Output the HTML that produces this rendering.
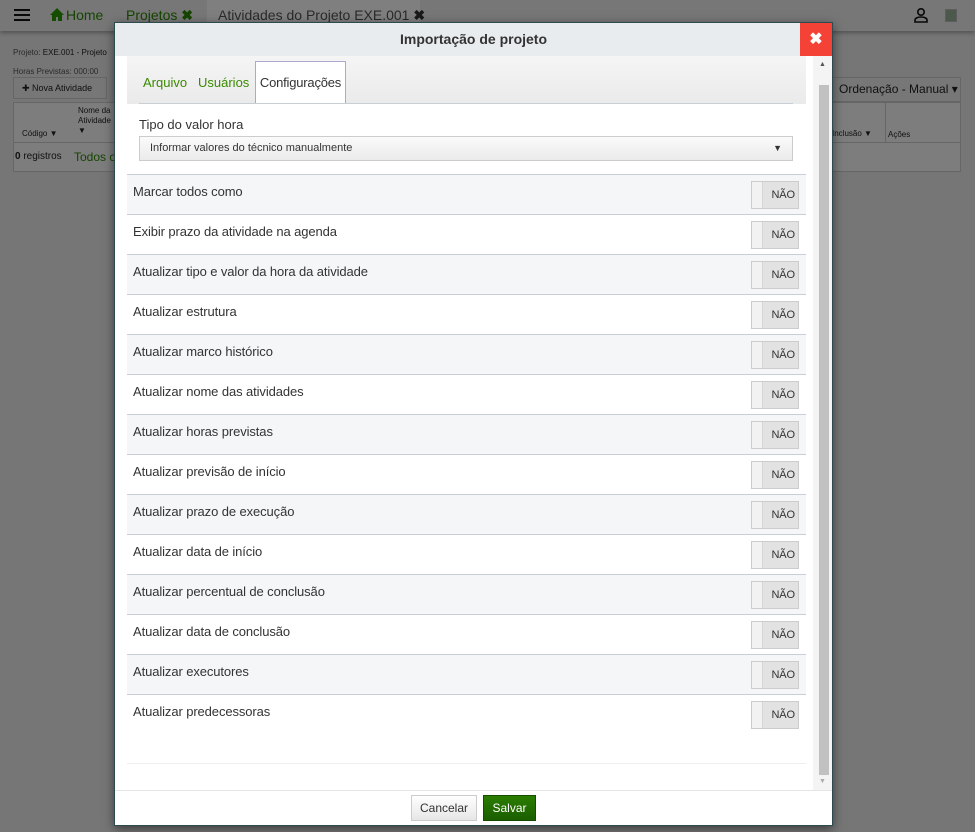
<!DOCTYPE html>
<html><head><meta charset="utf-8">
<style>
*{box-sizing:border-box;margin:0;padding:0}
body{width:975px;height:832px;overflow:hidden;font-family:"Liberation Sans",sans-serif;position:relative;color:#333;background:#ececec}
.top{position:absolute;left:0;top:0;width:975px;height:31px;background:#eeeeee;box-shadow:0 2px 4px rgba(0,0,0,.3)}
.top span{position:absolute;top:7px;font-size:14px}
.abs{position:absolute}
.ov{position:absolute;left:0;top:0;width:975px;height:832px;background:rgba(0,0,0,0.5)}
.modal{position:absolute;left:114px;top:22px;width:719px;height:804px;background:#fff;border:1px solid #2d4a4f;box-shadow:0 3px 10px rgba(0,0,0,.5)}
.mh{height:33px;background:#e9ecef;text-align:center;font-weight:bold;font-size:14px;line-height:33px;color:#333}
.close{position:absolute;right:0;top:0;width:32px;height:33px;background:#f44336;color:#fff;font-weight:bold;font-size:16px;text-align:center;line-height:33px}
.tabs{position:absolute;left:12px;top:33px;width:679px;height:48px;background:linear-gradient(#f5f5f5,#eaeaea)}
.tab{position:absolute;top:19px;font-size:13px;color:#3a8a00}
.ctab{position:absolute;left:128px;top:5px;width:91px;height:43px;background:#fff;border:1px solid #aac;border-bottom:none;font-size:13px;color:#333;text-align:center;line-height:42px;letter-spacing:-0.2px}
.row{position:absolute;left:12px;width:679px;height:40px;border-top:1px solid #c8ced6;font-size:13px;padding:9px 6px;letter-spacing:-0.1px}
.row.g{background:#f5f6f8}
.tg{position:absolute;right:7px;top:6px;width:48px;height:28px;border:1px solid #ccc;background:#e2e2e2;font-size:11px;text-align:right;padding-right:3px;line-height:26px;color:#333}
.tg:before{content:"";position:absolute;left:0;top:0;width:10px;height:26px;background:#f2f2f2;border-right:1px solid #d4d4d4}
</style></head><body>
<div class="top">
<div class="abs" style="left:14px;top:9px;width:16px;height:2px;background:#111;box-shadow:0 5px 0 #111,0 10px 0 #111"></div>
<svg class="abs" style="left:50px;top:8px" width="14" height="13" viewBox="0 0 14 13"><path d="M7 0L0 7h2v6h4V9h2v4h4V7h2z" fill="#2a9a00"/></svg>
<span style="left:66px;color:#2a8a00">Home</span>
<span style="left:126px;color:#2a8a00">Projetos <b style="color:#2a8a00">✖</b></span>
<div class="abs" style="left:207px;top:0;width:213px;height:31px;background:#ffffff"></div>
<span style="left:218px;color:#555">Atividades do Projeto EXE.001 <b style="color:#333">✖</b></span>
<svg class="abs" style="left:913px;top:7px" width="16" height="16" viewBox="0 0 16 16"><circle cx="8" cy="5" r="3.2" fill="none" stroke="#111" stroke-width="1.6"/><path d="M2 15v-2c0-2 3-3 6-3s6 1 6 3v2z" fill="none" stroke="#111" stroke-width="1.6"/></svg>
<div class="abs" style="left:945px;top:9px;width:12px;height:13px;background:#9ab09a;border:1px solid #bbb"></div>
</div>
<div class="abs" style="left:13px;top:48px;font-size:8px;color:#555">Projeto: <b style="font-weight:normal;color:#222">EXE.001 - Projeto</b></div>
<div class="abs" style="left:13px;top:67px;font-size:8px;color:#555">Horas Previstas: 000:00</div>
<div class="abs" style="left:13px;top:77px;width:94px;height:22px;background:#eee;border:1px solid #ccc;font-size:9px;line-height:20px;padding-left:8px;color:#222">✚ Nova Atividade</div>
<div class="abs" style="left:13px;top:102px;width:948px;height:70px;border:1px solid #ccc;background:#fafafa"></div>
<div class="abs" style="left:13px;top:142px;width:948px;height:1px;background:#ccc"></div>
<div class="abs" style="left:22px;top:129px;font-size:8px;color:#222">Código ▼</div>
<div class="abs" style="left:78px;top:106px;font-size:8px;color:#222;line-height:10px">Nome da<br>Atividade<br>▼</div>
<div class="abs" style="left:15px;top:151px;font-size:10px;color:#222"><b>0</b> registros</div>
<div class="abs" style="left:74px;top:150px;font-size:12px;color:#2a8a00">Todos o</div>
<div class="abs" style="left:832px;top:77px;width:129px;height:25px;background:#eee;border:1px solid #ccc;font-size:12px;line-height:23px;padding-left:6px;color:#222">Ordenação - Manual ▾</div>
<div class="abs" style="left:832px;top:129px;font-size:8px;color:#222">Inclusão ▼</div>
<div class="abs" style="left:885px;top:102px;width:1px;height:41px;background:#ccc"></div>
<div class="abs" style="left:888px;top:130px;font-size:8px;color:#222">Ações</div>
<div class="ov"></div>

<div class="modal">
<div class="mh">Importação de projeto</div>
<div class="close">✖</div>
<div class="tabs">
<span class="tab" style="left:16px">Arquivo</span>
<span class="tab" style="left:71px">Usuários</span>
<div class="ctab">Configurações</div>
</div>
<div class="abs" style="left:24px;top:80px;width:654px;height:1px;background:#c8ced6"></div>
<div class="abs" style="left:24px;top:94px;font-size:13px">Tipo do valor hora</div>
<div class="abs" style="left:24px;top:113px;width:654px;height:25px;border:1px solid #ccc;background:linear-gradient(#fafafa,#ebebeb);font-size:11px;line-height:23px;padding-left:10px">Informar valores do técnico manualmente<span style="position:absolute;right:10px;font-size:9px">▼</span></div>
<div class="row g" style="top:151px">Marcar todos como<div class="tg">NÃO</div></div>
<div class="row" style="top:191px">Exibir prazo da atividade na agenda<div class="tg">NÃO</div></div>
<div class="row g" style="top:231px">Atualizar tipo e valor da hora da atividade<div class="tg">NÃO</div></div>
<div class="row" style="top:271px">Atualizar estrutura<div class="tg">NÃO</div></div>
<div class="row g" style="top:311px">Atualizar marco histórico<div class="tg">NÃO</div></div>
<div class="row" style="top:351px">Atualizar nome das atividades<div class="tg">NÃO</div></div>
<div class="row g" style="top:391px">Atualizar horas previstas<div class="tg">NÃO</div></div>
<div class="row" style="top:431px">Atualizar previsão de início<div class="tg">NÃO</div></div>
<div class="row g" style="top:471px">Atualizar prazo de execução<div class="tg">NÃO</div></div>
<div class="row" style="top:511px">Atualizar data de início<div class="tg">NÃO</div></div>
<div class="row g" style="top:551px">Atualizar percentual de conclusão<div class="tg">NÃO</div></div>
<div class="row" style="top:591px">Atualizar data de conclusão<div class="tg">NÃO</div></div>
<div class="row g" style="top:631px">Atualizar executores<div class="tg">NÃO</div></div>
<div class="row" style="top:671px;height:70px;border-bottom:1px solid #eee">Atualizar predecessoras<div class="tg">NÃO</div></div>
<div class="abs" style="left:698px;top:33px;width:19px;height:734px;background:#f4f4f4"></div>
<div class="abs" style="left:704px;top:38px;font-size:7px;color:#555">▲</div>
<div class="abs" style="left:704px;top:62px;width:10px;height:690px;background:#c1c1c1"></div>
<div class="abs" style="left:704px;top:755px;font-size:7px;color:#aaa">▼</div>
<div class="abs" style="left:0;top:767px;width:717px;height:1px;background:#e5e5e5"></div>
<div class="abs" style="left:296px;top:772px;width:66px;height:26px;border:1px solid #ccc;background:linear-gradient(#fff,#e6e6e6);font-size:12px;text-align:center;line-height:24px">Cancelar</div>
<div class="abs" style="left:368px;top:772px;width:53px;height:26px;border:1px solid #144d00;background:linear-gradient(#2a7d00,#1b5e00);color:#fff;font-size:12px;text-align:center;line-height:24px">Salvar</div>
</div>
</body></html>
